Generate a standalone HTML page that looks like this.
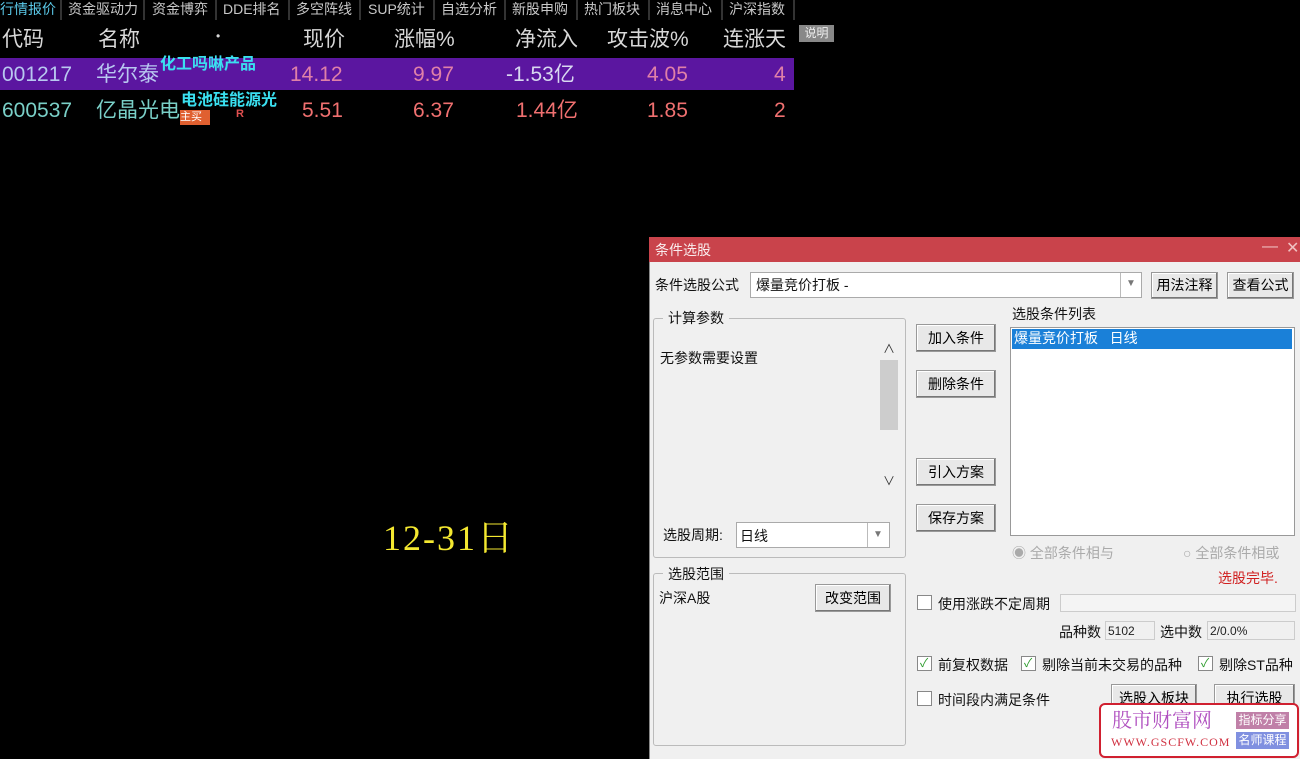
<!DOCTYPE html>
<html><head><meta charset="utf-8"><style>
*{margin:0;padding:0;box-sizing:border-box}
body{width:1300px;height:759px;background:#000;position:relative;overflow:hidden;font-family:"Liberation Sans","Noto Sans CJK SC",sans-serif}
.a{position:absolute;white-space:nowrap}
.tab{position:absolute;top:0;height:20px;font-size:14px;color:#c8c8c8;line-height:19px;border-right:2px solid #333}
.h{position:absolute;top:28px;font-size:21px;color:#d8d8d8;line-height:24px}
.r{font-size:21px;position:absolute;line-height:24px}
.btn{position:absolute;background:#e8e8e8;border:1px solid #999;box-shadow:inset -1px -1px #777,inset 1px 1px #fff;font-size:14px;color:#000;text-align:center}
.d{font-size:14px;color:#111;line-height:18px}
.cb{position:absolute;width:15px;height:15px;border:1px solid #888;background:#fff}
.cb.c::after{content:"✓";position:absolute;left:2px;top:-2px;color:#2a9a2a;font-size:12px;line-height:16px}
</style></head><body>
<div class="tab" style="left:0;width:62px;color:#5ac8e8">行情报价</div>
<div class="tab" style="left:64px;width:81px;padding-left:4px">资金驱动力</div>
<div class="tab" style="left:147px;width:70px;padding-left:5px">资金博弈</div>
<div class="tab" style="left:219px;width:71px;padding-left:4px">DDE排名</div>
<div class="tab" style="left:292px;width:69px;padding-left:4px">多空阵线</div>
<div class="tab" style="left:363px;width:72px;padding-left:5px">SUP统计</div>
<div class="tab" style="left:437px;width:69px;padding-left:4px">自选分析</div>
<div class="tab" style="left:508px;width:70px;padding-left:4px">新股申购</div>
<div class="tab" style="left:580px;width:70px;padding-left:4px">热门板块</div>
<div class="tab" style="left:652px;width:71px;padding-left:4px">消息中心</div>
<div class="tab" style="left:725px;width:70px;padding-left:4px">沪深指数</div>

<div class="h" style="left:2px">代码</div>
<div class="h" style="left:98px">名称</div>
<div class="h" style="left:216px;font-size:12px;top:24px">•</div>
<div class="h" style="left:303px">现价</div>
<div class="h" style="left:394px">涨幅%</div>
<div class="h" style="left:515px">净流入</div>
<div class="h" style="left:607px">攻击波%</div>
<div class="h" style="left:723px">连涨天</div>
<div class="a" style="left:799px;top:25px;width:35px;height:17px;background:#888;color:#eee;font-size:12px;text-align:center;line-height:17px">说明</div>

<div class="a" style="left:0;top:58px;width:794px;height:32px;background:#5b16a0"></div>
<div class="r" style="left:2px;top:63px;color:#b8c8f0">001217</div>
<div class="r" style="left:96px;top:63px;color:#b8c8f0">华尔泰</div>
<div class="a" style="left:160px;top:55px;color:#3ae0f0;font-size:16px;font-weight:bold;line-height:20px">化工吗啉产品</div>
<div class="r" style="left:290px;top:63px;color:#e080a8">14.12</div>
<div class="r" style="left:413px;top:63px;color:#e080a8">9.97</div>
<div class="r" style="left:506px;top:63px;color:#d8d8f0">-1.53亿</div>
<div class="r" style="left:647px;top:63px;color:#e080a8">4.05</div>
<div class="r" style="left:774px;top:63px;color:#e080a8">4</div>

<div class="r" style="left:2px;top:99px;color:#7ad0c8">600537</div>
<div class="r" style="left:96px;top:99px;color:#7ad0c8">亿晶光电</div>
<div class="a" style="left:181px;top:91px;color:#3ae0f0;font-size:16px;font-weight:bold;line-height:20px">电池硅能源光</div>
<div class="a" style="left:180px;top:110px;width:30px;height:15px;background:#e06030;color:#fff;font-size:11px;line-height:15px">主买</div>
<div class="a" style="left:236px;top:107px;color:#e05050;font-size:11px;font-weight:bold;line-height:14px">R</div>
<div class="r" style="left:302px;top:99px;color:#f07070">5.51</div>
<div class="r" style="left:413px;top:99px;color:#f07070">6.37</div>
<div class="r" style="left:516px;top:99px;color:#f07070">1.44亿</div>
<div class="r" style="left:647px;top:99px;color:#f07070">1.85</div>
<div class="r" style="left:774px;top:99px;color:#f07070">2</div>

<div class="a" style="left:383px;top:518px;color:#f4e830;font-size:36px;line-height:40px;letter-spacing:2px;font-family:'Liberation Serif','Noto Serif CJK SC',serif">12-31日</div>

<!-- dialog -->
<div class="a" style="left:649px;top:237px;width:651px;height:522px;background:#f0f0f0;border-left:1px solid #888"></div>
<div class="a" style="left:649px;top:237px;width:651px;height:25px;background:#c9434b"></div>
<div class="a" style="left:655px;top:241px;color:#fff;font-size:14px;opacity:.9;line-height:18px">条件选股</div>
<div class="a" style="left:1262px;top:238px;color:#f0c0c0;font-size:16px">—</div>
<div class="a" style="left:1286px;top:238px;color:#f0c0c0;font-size:16px">✕</div>

<div class="a d" style="left:655px;top:276px">条件选股公式</div>
<div class="a" style="left:750px;top:272px;width:392px;height:26px;background:#fff;border:1px solid #aaa"></div>
<div class="a" style="left:1120px;top:273px;width:1px;height:24px;background:#bbb"></div>
<div class="a" style="left:1126px;top:278px;color:#777;font-size:10px">▼</div>
<div class="a d" style="left:756px;top:276px">爆量竞价打板 -</div>
<div class="btn" style="left:1151px;top:272px;width:67px;height:27px;line-height:25px">用法注释</div>
<div class="btn" style="left:1227px;top:272px;width:67px;height:27px;line-height:25px">查看公式</div>

<div class="a" style="left:653px;top:318px;width:253px;height:240px;border:1px solid #bbb;border-radius:3px"></div>
<div class="a d" style="left:663px;top:309px;background:#f0f0f0;padding:0 5px">计算参数</div>
<div class="a d" style="left:660px;top:349px">无参数需要设置</div>
<div class="a" style="left:880px;top:360px;width:18px;height:70px;background:#cdcdcd"></div>
<div class="a" style="left:883px;top:340px;color:#333;font-size:12px">∧</div>
<div class="a" style="left:883px;top:472px;color:#333;font-size:12px">∨</div>
<div class="a d" style="left:663px;top:526px">选股周期:</div>
<div class="a" style="left:736px;top:522px;width:154px;height:26px;background:#fff;border:1px solid #aaa"></div>
<div class="a" style="left:867px;top:523px;width:1px;height:24px;background:#bbb"></div>
<div class="a" style="left:873px;top:529px;color:#777;font-size:10px">▼</div>
<div class="a d" style="left:740px;top:527px">日线</div>

<div class="btn" style="left:916px;top:324px;width:80px;height:28px;line-height:26px">加入条件</div>
<div class="btn" style="left:916px;top:370px;width:80px;height:28px;line-height:26px">删除条件</div>
<div class="btn" style="left:916px;top:458px;width:80px;height:28px;line-height:26px">引入方案</div>
<div class="btn" style="left:916px;top:504px;width:80px;height:28px;line-height:26px">保存方案</div>

<div class="a d" style="left:1012px;top:305px">选股条件列表</div>
<div class="a" style="left:1010px;top:327px;width:285px;height:209px;background:#fff;border:1px solid #999"></div>
<div class="a" style="left:1012px;top:329px;width:280px;height:20px;background:#1a80d8"></div>
<div class="a" style="left:1014px;top:329px;color:#fff;font-size:14px;line-height:18px">爆量竞价打板&nbsp;&nbsp;&nbsp;日线</div>
<div class="a" style="left:1012px;top:543px;color:#aaa;font-size:14px">◉ 全部条件相与</div>
<div class="a" style="left:1183px;top:543px;color:#aaa;font-size:14px">○ 全部条件相或</div>
<div class="a" style="left:1218px;top:568px;color:#d02020;font-size:14px">选股完毕.</div>

<div class="a" style="left:653px;top:573px;width:253px;height:173px;border:1px solid #bbb;border-radius:3px"></div>
<div class="a d" style="left:663px;top:565px;background:#f0f0f0;padding:0 5px">选股范围</div>
<div class="a d" style="left:659px;top:589px">沪深A股</div>
<div class="btn" style="left:815px;top:584px;width:76px;height:28px;line-height:26px">改变范围</div>

<div class="cb" style="left:917px;top:595px"></div>
<div class="a d" style="left:938px;top:595px">使用涨跌不定周期</div>
<div class="a" style="left:1060px;top:594px;width:236px;height:18px;border:1px solid #ccc;background:#f4f4f4"></div>
<div class="a d" style="left:1059px;top:623px">品种数</div>
<div class="a" style="left:1105px;top:621px;width:50px;height:19px;border:1px solid #ccc;font-size:12px;line-height:18px;padding-left:2px;color:#222">5102</div>
<div class="a d" style="left:1160px;top:623px">选中数</div>
<div class="a" style="left:1207px;top:621px;width:88px;height:19px;border:1px solid #ccc;font-size:12px;line-height:18px;padding-left:2px;color:#222">2/0.0%</div>

<div class="cb c" style="left:917px;top:656px"></div>
<div class="a d" style="left:938px;top:656px">前复权数据</div>
<div class="cb c" style="left:1021px;top:656px"></div>
<div class="a d" style="left:1042px;top:656px">剔除当前未交易的品种</div>
<div class="cb c" style="left:1198px;top:656px"></div>
<div class="a d" style="left:1219px;top:656px">剔除ST品种</div>
<div class="cb" style="left:917px;top:691px"></div>
<div class="a d" style="left:938px;top:691px">时间段内满足条件</div>
<div class="btn" style="left:1111px;top:684px;width:86px;height:28px;line-height:26px">选股入板块</div>
<div class="btn" style="left:1214px;top:684px;width:81px;height:28px;line-height:26px">执行选股</div>

<div class="a" style="left:1099px;top:703px;width:200px;height:55px;background:#fff;border:2px solid #d02030;border-radius:6px"></div>
<div class="a" style="left:1112px;top:709px;color:#b050c0;font-size:20px;line-height:24px;font-family:'Liberation Serif','Noto Serif CJK SC',serif">股市财富网</div>
<div class="a" style="left:1111px;top:735px;color:#d03040;font-size:12px;line-height:14px;font-family:'Liberation Serif',serif;letter-spacing:1px">WWW.GSCFW.COM</div>
<div class="a" style="left:1236px;top:712px;width:53px;height:17px;background:#c080a8;color:#fff;font-size:12px;line-height:17px;text-align:center">指标分享</div>
<div class="a" style="left:1236px;top:732px;width:53px;height:17px;background:#8090e0;color:#fff;font-size:12px;line-height:17px;text-align:center">名师课程</div>
</body></html>
